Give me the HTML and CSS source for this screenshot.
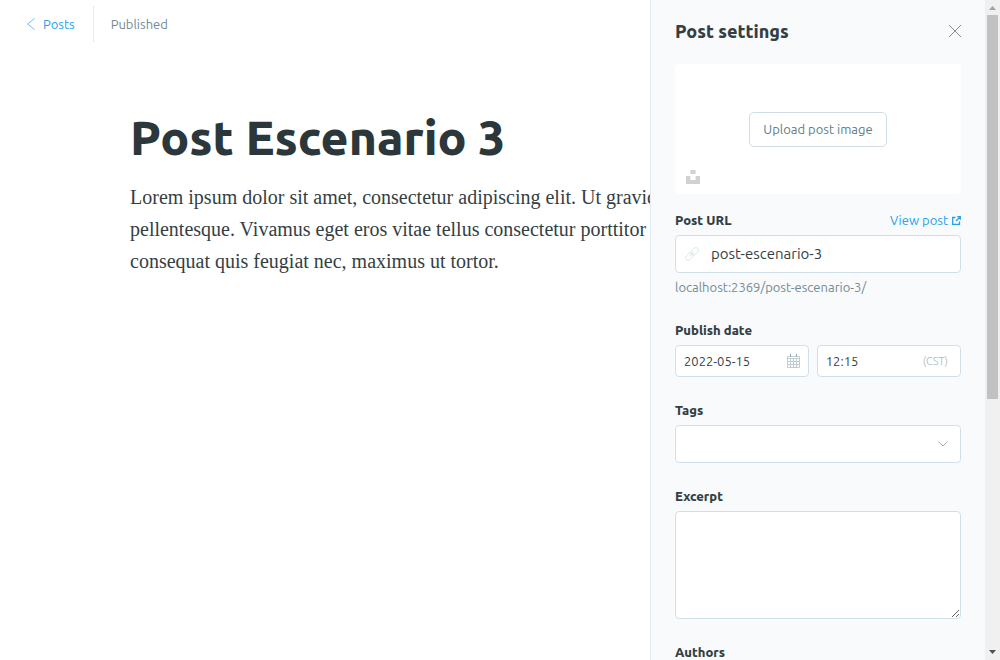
FILE: index.html
```html
<!DOCTYPE html>
<html lang="en">
<head>
<meta charset="utf-8">
<meta name="viewport" content="width=device-width, initial-scale=1">
<title>Post Escenario 3</title>
<link rel="stylesheet" href="styles.css">
</head>
<body>
<div class="app">
  <main class="editor">
    <header class="editor-header">
      <a class="back-link" href="#posts">
        <svg class="back-icon" viewBox="0 0 8 12" aria-hidden="true"><path d="M7.500.5.7 6l6.800 5.500"/></svg>
        Posts
      </a>
      <span class="status">Published</span>
    </header>
    <article class="post">
      <h1 class="post-title">Post Escenario 3</h1>
      <p class="post-body">Lorem ipsum dolor sit amet, consectetur adipiscing elit. Ut gravida<br>pellentesque. Vivamus eget eros vitae tellus consectetur porttitor<br>consequat quis feugiat nec, maximus ut tortor.</p>
    </article>
  </main>

  <aside class="settings">
    <form class="settings-form">
      <header class="settings-header">
        <h2 class="settings-title">Post settings</h2>
        <button class="close" type="button" aria-label="Close">
          <svg viewBox="0 0 14 14" aria-hidden="true"><path d="M1 1l12 12M13 1 1 13"/></svg>
        </button>
      </header>

      <div class="uploader">
        <button class="upload-button" type="button">Upload post image</button>
        <button class="unsplash" type="button" aria-label="Unsplash">
          <svg viewBox="0 0 14 14" aria-hidden="true"><path d="M4.400 0h5.200v4H4.400zM0 6h4.400v4h5.200V6H14v8H0z"/></svg>
        </button>
      </div>

      <div class="field">
        <div class="label-row">
          <label class="label" for="url">Post URL</label>
          <a class="view-link" href="#view">View post
            <svg class="external-icon" viewBox="0 0 9 9" aria-hidden="true"><path d="M3.500 1.500h-2.800v6.800h6.800V5.500"/><path d="M5.200.7h3.100v3.100M8.300.7 4 5"/></svg>
          </a>
        </div>
        <div class="control url-control">
          <svg class="link-icon" viewBox="0 0 14 14" aria-hidden="true"><g transform="rotate(-45 7 7)"><rect x="-1" y="4.500" width="8.500" height="5" rx="2.500"/><rect x="6.500" y="4.500" width="8.500" height="5" rx="2.500"/><path d="M4 7h6"/></g></svg>
          <input class="input" id="url" type="text" value="post-escenario-3">
        </div>
        <p class="hint">localhost:2369/post-escenario-3/</p>
      </div>

      <div class="field">
        <label class="label" for="date">Publish date</label>
        <div class="date-row">
          <div class="control date-control">
            <input class="input small-input" id="date" type="text" value="2022-05-15">
            <svg class="calendar-icon" viewBox="0 0 13 14" aria-hidden="true"><path d="M.5 2.500h12v11H.5zM.5 4.500h12M.5 7.500h12M.5 10.500h12M3.500 4.500v9M6.500 4.500v9M9.500 4.500v9"/><path class="calendar-rings" d="M3.500 0v3M9.500 0v3"/></svg>
          </div>
          <div class="control time-control">
            <input class="input small-input" type="text" value="12:15" aria-label="Publish time">
            <span class="timezone">(CST)</span>
          </div>
        </div>
      </div>

      <div class="field">
        <label class="label" for="tags">Tags</label>
        <div class="control">
          <select class="input" id="tags"><option value=""></option></select>
          <svg class="chevron" viewBox="0 0 10 6" aria-hidden="true"><path d="M.5.5 5 5 9.500.5"/></svg>
        </div>
      </div>

      <div class="field">
        <label class="label" for="excerpt">Excerpt</label>
        <textarea class="excerpt" id="excerpt"></textarea>
      </div>

      <div class="field">
        <span class="label">Authors</span>
      </div>
    </form>
    <div class="scrollbar" aria-hidden="true">
      <svg class="scroll-arrow scroll-arrow-up" viewBox="0 0 7 4"><path d="M3.500 0 7 4H0z"/></svg>
      <div class="scroll-track"><div class="scroll-thumb"></div></div>
      <svg class="scroll-arrow" viewBox="0 0 7 4"><path d="M0 0h7L3.500 4z"/></svg>
    </div>
  </aside>
</div>
</body>
</html>
```
FILE: styles.css
```css
* {
  box-sizing: border-box;
}

body {
  margin: 0;
  color: #343f44;
  font: 13px/20px Ubuntu, "Noto Sans", "Open Sans", sans-serif;
}

h1, h2, p {
  margin: 0;
}

a {
  color: #26a1ec;
  text-decoration: none;
}

button {
  padding: 0;
  border: 0;
  background: none;
  color: inherit;
  font: inherit;
  cursor: pointer;
}

svg {
  display: block;
  fill: none;
  stroke: currentColor;
}

.app {
  display: flex;
  height: 100vh;
  overflow: hidden;
  background: #fff;
}

.editor {
  flex: 1;
  min-width: 0;
  overflow: hidden;
}

.editor-header {
  display: flex;
  align-items: center;
  height: 36px;
  margin: 6px 27px 0;
}

.back-link {
  display: flex;
  align-items: center;
  align-self: stretch;
  gap: 8px;
  padding-right: 18px;
  border-right: 1px solid #dfecf3;
}

.back-icon {
  width: 8px;
  height: 12px;
  stroke-width: .7;
}

.status {
  padding-left: 17px;
  color: #738a94;
}

.post {
  padding: 65px 0 0 130px;
  white-space: nowrap;
}

.post-title {
  color: #2c373b;
  font-size: 48px;
  font-weight: 800;
  line-height: 60px;
}

.post-body {
  padding-top: 14px;
  font-family: "Liberation Serif", serif;
  font-size: 20px;
  line-height: 32px;
}

.settings {
  display: flex;
  flex: 0 0 350px;
  min-width: 0;
  border-left: 1px solid #dfecf3;
  background: #f8fafc;
}

.settings-form {
  flex: 1;
  min-width: 0;
  padding: 16px 24px 0;
  overflow: hidden;
}

.settings-header {
  display: flex;
  align-items: center;
  justify-content: space-between;
  height: 30px;
}

.settings-title {
  font-size: 18px;
  font-weight: 800;
  line-height: 30px;
}

.close {
  width: 14px;
  margin-right: -1px;
  color: #66757c;
}

.close svg {
  stroke-width: .8;
}

.uploader {
  display: flex;
  position: relative;
  align-items: center;
  justify-content: center;
  height: 130px;
  margin: 18px 0 16px;
  border-radius: 4px;
  background: #fff;
}

.upload-button {
  height: 35px;
  padding: 0 13px;
  border: 1px solid #cfdee6;
  border-radius: 5px;
  background: #fff;
  color: #647c86;
}

.unsplash {
  position: absolute;
  bottom: 10px;
  left: 11px;
  width: 14px;
  color: #d2d2d2;
}

.unsplash svg {
  fill: currentColor;
  stroke: none;
}

.field {
  display: flow-root;
}

.field + .field {
  margin-top: 23px;
}

.label {
  display: block;
  margin-bottom: 5px;
  font-weight: 800;
}

.label-row {
  display: flex;
  align-items: flex-start;
  justify-content: space-between;
}

.view-link {
  display: flex;
  align-items: center;
  gap: 4px;
}

.external-icon {
  width: 9px;
  height: 9px;
  stroke-width: 1.300;
}

.control {
  display: flex;
  align-items: center;
  height: 38px;
  border: 1px solid #d0e0ea;
  border-radius: 4px;
  background: #fff;
}

.input {
  flex: 1;
  min-width: 0;
  padding: 0;
  border: 0;
  outline: 0;
  appearance: none;
  background: none;
  color: inherit;
  font: inherit;
  font-size: 15px;
}

.small-input {
  font-size: 13px;
}

.url-control {
  gap: 12px;
  padding-left: 9px;
}

.link-icon {
  width: 14px;
  height: 14px;
  color: #d3e0e6;
  stroke-width: .8;
}

.hint {
  padding-top: 4px;
  color: #738a94;
}

.date-row {
  display: flex;
  gap: 8px;
}

.date-control,
.time-control {
  flex: 133;
  min-width: 0;
  height: 32px;
  padding: 0 8px;
}

.time-control {
  flex: 145;
}

.calendar-icon {
  width: 13px;
  height: 14px;
  color: #c0ced3;
}

.calendar-rings {
  stroke: #96a7af;
}

.timezone {
  margin-right: 4px;
  color: #a9b7bd;
  font-size: 11px;
  font-weight: 300;
}

#tags {
  align-self: stretch;
  padding-left: 10px;
}

.chevron {
  width: 10px;
  height: 6px;
  margin-right: 12px;
  color: #9fb3bd;
}

.excerpt {
  display: block;
  width: 100%;
  height: 108px;
  padding: 8px 10px;
  border: 1px solid #d0e0ea;
  border-radius: 4px;
  outline: 0;
  background: #fff;
  color: inherit;
  font: inherit;
  resize: vertical;
}

.scrollbar {
  display: flex;
  flex: 0 0 15px;
  flex-direction: column;
  align-items: center;
  justify-content: space-between;
  padding: 6px 0;
  background: #f0f0f0;
}

.scroll-arrow {
  width: 7px;
  height: 4px;
  fill: #505050;
  stroke: none;
}

.scroll-arrow-up {
  fill: #a3a3a3;
}

.scroll-track {
  flex: 1;
  width: 11px;
  margin: 5px 0;
}

.scroll-thumb {
  height: 61%;
  background: #c1c1c1;
}
```
